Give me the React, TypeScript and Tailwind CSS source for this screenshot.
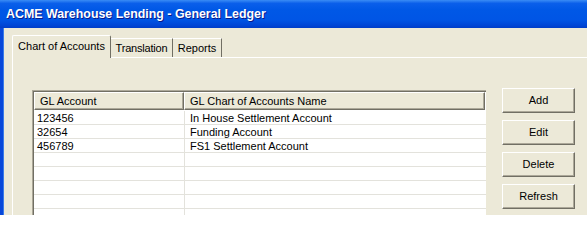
import React from "react";

const rows = [
  ["123456", "In House Settlement Account"],
  ["32654", "Funding Account"],
  ["456789", "FS1 Settlement Account"],
  ["", ""],
  ["", ""],
  ["", ""],
  ["", ""],
  ["", ""],
];

function Btn({ label }: { label: string }) {
  return (
    <div className="w-[73px] h-[25px] bg-[#ECE9D8] border-t border-l border-white border-b border-r border-b-[#716F64] border-r-[#716F64] shadow-[inset_-1px_-1px_0_#ACA899] flex items-center justify-center text-[11px] text-black">
      {label}
    </div>
  );
}

export default function App() {
  return (
    <div className="w-[587px] h-[215px] overflow-hidden bg-[#ECE9D8] flex flex-col font-['Liberation_Sans',Arial,sans-serif]">
      <div className="h-[28px] shrink-0 bg-[linear-gradient(to_bottom,#3A8CF5_0%,#0A5FEA_12%,#0058E6_35%,#0055E5_70%,#0046D6_90%,#003DC8_100%)] flex items-center pl-[6px]">
        <span className="text-white font-bold text-[12.4px] [text-shadow:1px_1px_0_#0A1A8A]">
          ACME Warehouse Lending - General Ledger
        </span>
      </div>
      <div className="flex flex-1 min-h-0">
        <div className="w-[4px] shrink-0 bg-[#0848DA] border-r border-[#3A7BE8]"></div>
        <div className="flex-1 flex flex-col pl-[8px] pt-[7px]">
          {/* tabs */}
          <div className="flex items-end h-[22px] shrink-0">
            <div className="w-[99px] justify-center bg-[#ECE9D8] border-t border-l border-white border-r border-r-[#716F64] rounded-t-[2px] flex items-center text-[11px] text-black relative z-10 mb-[-1px] h-[23px] pb-[2px]">
              Chart of Accounts
            </div>
            <div className="w-[62px] justify-center h-[19px] bg-[#ECE9D8] border-t border-white border-r border-r-[#716F64] flex items-center text-[11px] tracking-[-0.2px] text-black">
              Translation
            </div>
            <div className="w-[49px] justify-center h-[19px] bg-[#ECE9D8] border-t border-white border-r border-r-[#716F64] flex items-center text-[11px] text-black">
              Reports
            </div>
          </div>
          {/* panel */}
          <div className="flex-1 border-t border-l border-white flex pl-[19px] pt-[32px]">
            <div className="w-[454px] border-t border-l border-[#ACA899] shadow-[inset_1px_1px_0_#716F64] bg-white pt-[1px] pl-[1px] self-stretch">
              <div className="flex h-[18px] text-[11px] text-black">
                <div className="w-[150px] bg-[#ECE9D8] border-t border-l border-white border-b border-r border-b-[#716F64] border-r-[#716F64] shadow-[inset_-1px_-1px_0_#ACA899] pl-[5px] flex items-center">
                  GL Account
                </div>
                <div className="w-[301px] bg-[#ECE9D8] border-t border-l border-white border-b border-r border-b-[#716F64] border-r-[#716F64] shadow-[inset_-1px_-1px_0_#ACA899] pl-[5px] flex items-center">
                  GL Chart of Accounts Name
                </div>
              </div>
              <div className="pt-[1px]">
                {rows.map((r, i) => (
                  <div key={i} className="flex h-[14px] border-b border-[#E3E2DC] text-[11px] text-black leading-[14px]">
                    <div className="w-[151px] pl-[3px] border-r border-[#E3E2DC]">{r[0]}</div>
                    <div className="w-[300px] pl-[5px]">{r[1]}</div>
                  </div>
                ))}
              </div>
            </div>
            <div className="flex flex-col gap-[7px] ml-[16px] mt-[-2px]">
              <Btn label="Add" />
              <Btn label="Edit" />
              <Btn label="Delete" />
              <Btn label="Refresh" />
            </div>
          </div>
        </div>
      </div>
    </div>
  );
}
